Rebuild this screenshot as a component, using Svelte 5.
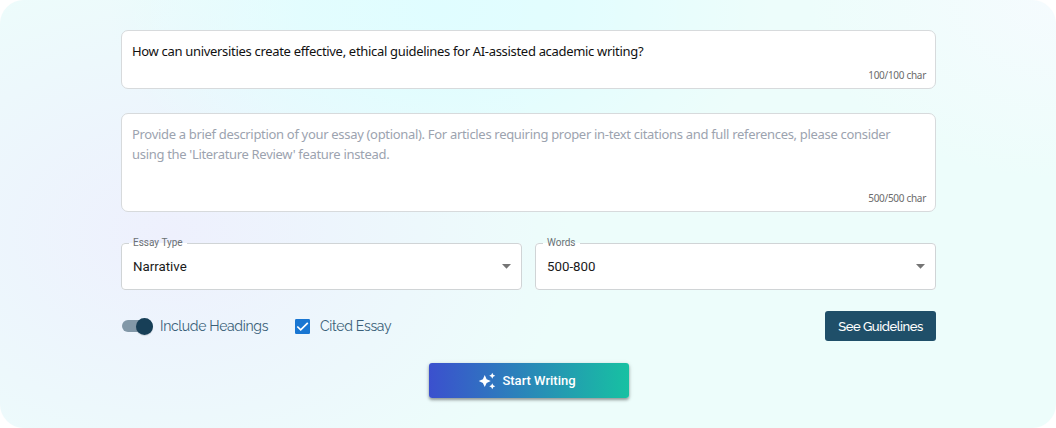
<script>
	let title = $state('How can universities create effective, ethical guidelines for AI-assisted academic writing?');
	let description = $state('');
	let includeHeadings = $state(true);
	let cited = $state(true);

	const selects = [
		{ label: 'Essay Type', value: 'Narrative' },
		{ label: 'Words', value: '500-800' }
	];
</script>

<section class="panel">
	<div class="box box-title">
		<textarea class="title" aria-label="Title" spellcheck="false" bind:value={title}></textarea>
		<span class="count">100/100 char</span>
	</div>
	<div class="box box-description">
		<textarea
			class="description"
			aria-label="Description"
			spellcheck="false"
			placeholder="Provide a brief description of your essay (optional). For articles requiring proper in-text citations and full references, please consider using the 'Literature Review' feature instead."
			bind:value={description}
		></textarea>
		<span class="count">500/500 char</span>
	</div>
	<div class="selects">
		{#each selects as select}
			<fieldset>
				<legend>{select.label}</legend>
				<div class="value">
					<span>{select.value}</span>
					<svg width="9" height="5" viewBox="0 0 9 5"><path d="M0 0h9L4.5 4.8z" fill="#757575" /></svg>
				</div>
			</fieldset>
		{/each}
	</div>
	<div class="options">
		<label class="switch">
			<input type="checkbox" bind:checked={includeHeadings} hidden />
			<span class="track" class:on={includeHeadings}><span class="thumb"></span></span>
			<span class="headings">Include Headings</span>
		</label>
		<label class="check">
			<input type="checkbox" bind:checked={cited} hidden />
			<svg width="15" height="15" viewBox="0 0 15 15">
				<rect width="15" height="15" rx="1.2" fill="#1976d2" />
				{#if cited}
					<path d="M2.300 7.500 5.700 10.900 12.800 3.800" fill="none" stroke="#fff" stroke-width="1.7" />
				{/if}
			</svg>
			<span class="cited">Cited Essay</span>
		</label>
		<button class="guidelines">See Guidelines</button>
	</div>
	<button class="start">
		<svg width="18" height="18" viewBox="0 0 24 24" fill="#fff">
			<path d="m19 9 1.25-2.75L23 5l-2.75-1.25L19 1l-1.25 2.75L15 5l2.75 1.25zm0 6-1.25 2.75L15 19l2.75 1.25L19 23l1.25-2.75L23 19l-2.75-1.25zm-7.5-5.5L9 4 6.5 9.500 1 12l5.500 2.500L9 20l2.500-5.500L17 12z" />
		</svg>
		<span>Start Writing</span>
	</button>
</section>

<style>
	:global(body) {
		background: #fff;
	}
	.panel {
		box-sizing: border-box;
		width: 1056px;
		height: 428px;
		padding: 30px 120px 0 121px;
		border-radius: 24px;
		display: flex;
		flex-direction: column;
		font-family: 'Noto Sans', sans-serif;
		background:
			radial-gradient(ellipse 330px 210px at 440px 10px, #e0fdff 0%, #e0fdffcc 40%, #e0fdff00 100%),
			radial-gradient(ellipse 400px 290px at 170px 235px, #eef0fd 0%, #edf3fdcc 40%, #edf5fd00 100%),
			radial-gradient(ellipse 250px 180px at 1056px 0, #f5fbfe 0%, #f5fbfe00 100%),
			#edfdfb;
	}
	.box {
		box-sizing: border-box;
		border: 1px solid #d7dadc;
		border-radius: 7px;
		background: #fff;
		display: flex;
		flex-direction: column;
		align-items: flex-end;
	}
	.box-title {
		height: 59px;
		padding: 10px 9px 5px 10px;
	}
	.box-description {
		height: 99px;
		margin-top: 24px;
		padding: 10px 9px 5px 10px;
	}
	textarea {
		box-sizing: border-box;
		flex: 1;
		width: 100%;
		min-height: 0;
		margin: 0;
		padding: 0 16px 0 0;
		border: 0;
		outline: 0;
		resize: none;
		overflow: hidden;
		background: none;
		font: 13px/20px 'Noto Sans', sans-serif;
		letter-spacing: -0.315px;
		color: #111;
	}
	.description::placeholder {
		color: #9ca3af;
		opacity: 1;
	}
	.count {
		font-size: 10px;
		line-height: 16px;
		letter-spacing: -0.3px;
		color: #6b6b6b;
	}
	.selects {
		display: grid;
		grid-template-columns: 1fr 1fr;
		gap: 13px;
		margin-top: 24px;
	}
	fieldset {
		box-sizing: border-box;
		min-width: 0;
		height: 54px;
		margin: 0;
		padding: 0 10px 0 7px;
		border: 1px solid #d0d4d6;
		border-radius: 4px;
		background: #fff;
		font-family: Roboto, sans-serif;
	}
	legend {
		padding: 0 4px;
		font-size: 10px;
		line-height: 14px;
		color: #6b7074;
	}
	.value {
		display: flex;
		align-items: center;
		justify-content: space-between;
		height: 32px;
		padding-left: 4px;
		font-size: 13.3px;
		color: #1a1a1a;
	}
	.options {
		display: flex;
		align-items: center;
		height: 30px;
		margin-top: 21px;
		font-family: Raleway, Lato, sans-serif;
		font-size: 14px;
		color: #3a5f78;
	}
	.switch,
	.check {
		display: flex;
		align-items: center;
		letter-spacing: -0.33px;
	}
	.track {
		box-sizing: border-box;
		display: flex;
		align-items: center;
		width: 31px;
		height: 12px;
		margin: 0 7px 0 1px;
		border-radius: 6px;
		background: #8298a8;
	}
	.track.on {
		justify-content: flex-end;
	}
	.thumb {
		width: 17px;
		height: 17px;
		border-radius: 50%;
		background: #173f57;
		box-shadow: 0 1px 1px #0002;
	}
	.check {
		margin-left: 27px;
		gap: 10px;
	}
	button {
		border: 0;
		padding: 0;
		color: #fff;
	}
	.guidelines {
		width: 111px;
		height: 30px;
		margin-left: auto;
		border-radius: 3px;
		background: #1f4f69;
		font: 500 13px Raleway, Lato, sans-serif;
		letter-spacing: -0.45px;
	}
	.start {
		display: flex;
		align-items: center;
		justify-content: center;
		gap: 6px;
		width: 200px;
		height: 35px;
		margin: 22px auto 0 308px;
		padding-right: 4px;
		border-radius: 3px;
		background: linear-gradient(90deg, #3b50ce, #17c1a2);
		box-shadow: 0 2px 3px #0005, 0 1px 5px #0002;
		font: 500 13px Roboto, sans-serif;
	}
</style>
